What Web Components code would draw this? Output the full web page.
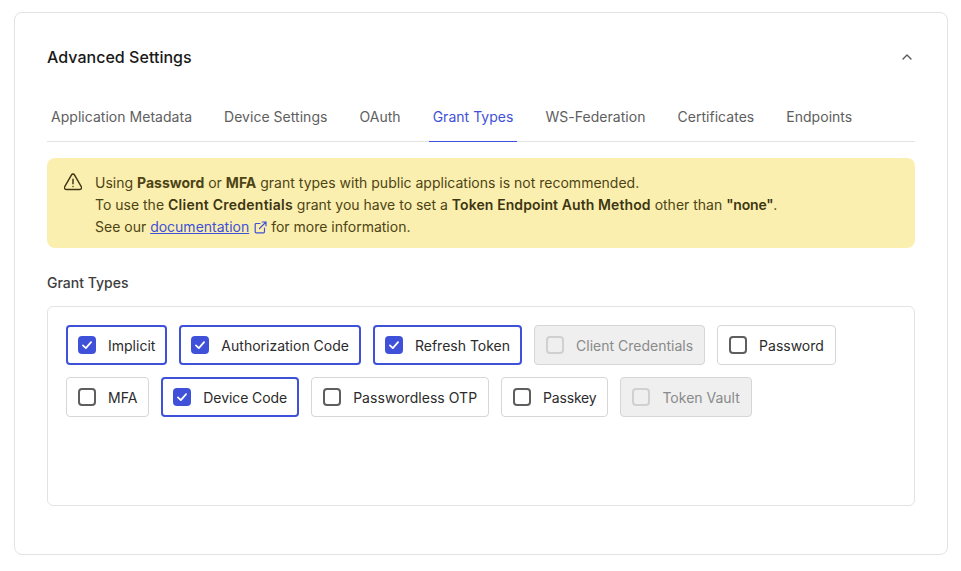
<!DOCTYPE html>
<html><head><meta charset="utf-8">
<style>
html,body{margin:0;padding:0;background:#fff}
body{font-family:Inter,"Liberation Sans",sans-serif;font-size:14px;color:#1e212a}
</style></head>
<body>
<template id="t-card"><style>
:host{display:block;box-sizing:border-box;margin:12px 13px 16px 14px;height:543px;border:1px solid #e3e3e3;border-radius:8px;padding:32px;background:#fff}
header{display:flex;justify-content:space-between;align-items:center;height:24px}
h2{margin:0;font-size:16px;line-height:24px;font-weight:500;color:#191919;letter-spacing:.03px}
svg{display:block;margin-right:1px}
</style>
<header><h2><slot name="title"></slot></h2>
<svg width="14" height="14" viewBox="0 0 14 14" fill="none" stroke="#5a5a5a" stroke-width="1.4" stroke-linecap="round" stroke-linejoin="round"><path d="M3 9l4-4 4 4"/></svg></header>
<slot></slot></template>

<template id="t-tabs"><style>
:host{display:flex;gap:24px;margin-top:32px;height:40px;border-bottom:1px solid #e3e3e3;box-sizing:content-box}
</style><slot></slot></template>

<template id="t-tab"><style>
:host{display:block;padding:0 4px 8px;height:40px;line-height:32px;font-size:14px;color:#5e5e5e;letter-spacing:.03px;white-space:nowrap;box-sizing:border-box}
:host([active]){color:#3f51d9;border-bottom:1px solid #3f51d9;height:41px}
</style><slot></slot></template>

<template id="t-banner"><style>
:host{display:flex;gap:13px;margin-top:16px;height:90px;box-sizing:border-box;padding:14px 17px;background:#fbefaf;border-radius:8px;color:#4d4415;font-size:14px;line-height:22px}
svg{flex:none;margin-top:1px}
::slotted(b){font-weight:600;color:#3d3612}
::slotted(.l1){letter-spacing:.006px}
</style>
<svg width="18" height="18" viewBox="1 1 16 16" fill="none" stroke="#3d3612" stroke-width="1.3" stroke-linecap="round" stroke-linejoin="round"><path d="M7.7 2.6 1.5 13.4A1.5 1.5 0 0 0 2.8 15.6h12.4a1.5 1.5 0 0 0 1.3-2.2L10.3 2.6a1.5 1.5 0 0 0-2.6 0z"/><path d="M9 6.6v4M9 13v.1"/></svg>
<div><slot></slot></div></template>

<template id="t-panel"><style>
:host{display:block}
.l{margin-top:24px;height:22px;line-height:22px;font-size:14px;font-weight:500;color:#3d3d3d}
.p{margin-top:12px;height:200px;box-sizing:border-box;border:1px solid #e3e3e3;border-radius:6px;padding:18px;display:flex;flex-wrap:wrap;align-content:flex-start;gap:12px}
</style><div class="l"><slot name="label"></slot></div><div class="p"><slot></slot></div></template>

<template id="t-opt"><style>
:host{display:flex;align-items:center;gap:12px;height:40px;box-sizing:border-box;padding:0 11px;border:1px solid #d6d6d6;border-radius:4px;background:#fff;color:#2b2b2b;font-size:14px;white-space:nowrap}
:host([checked]){border:2px solid #3f51d9;padding:0 10px}
:host([disabled]){background:#efefef;color:#8a8a8a}
:host([tight]){letter-spacing:-.08px}
:host([tighter]){letter-spacing:-.2px}
:host([loose]){letter-spacing:.04px}
i{display:block;width:18px;height:18px;box-sizing:border-box;border:2px solid #5e5e5e;border-radius:4px}
:host([disabled]) i{border-color:#d0d0d0}
:host([checked]) i{border:0;background:#3f51d9;display:flex;align-items:center;justify-content:center}
svg{display:none}
:host([checked]) svg{display:block}
</style><i><svg width="14" height="14" viewBox="0 0 12 12" fill="none" stroke="#fff" stroke-width="1.5" stroke-linecap="round" stroke-linejoin="round"><path d="M2.5 6.4 5 8.7 9.5 3.6"/></svg></i><slot></slot></template>

<x-card>
<span slot="title">Advanced Settings</span>
<x-tabs><x-tab>Application Metadata</x-tab><x-tab>Device Settings</x-tab><x-tab>OAuth</x-tab><x-tab active>Grant Types</x-tab><x-tab>WS-Federation</x-tab><x-tab>Certificates</x-tab><x-tab>Endpoints</x-tab></x-tabs>
<x-banner><span class="l1">Using <b>Password</b> or <b>MFA</b> grant types with public applications is not recommended.</span><br>To use the <b style="letter-spacing:.25px">Client Credentials</b> grant you have to set a <b style="letter-spacing:.1px">Token Endpoint Auth Method</b> other than <b style="letter-spacing:-.2px">"none"</b>.<br>See our <x-link>documentation</x-link> for more information.</x-banner>
<x-panel><span slot="label">Grant Types</span>
<x-opt checked>Implicit</x-opt><x-opt checked>Authorization Code</x-opt><x-opt checked>Refresh Token</x-opt><x-opt disabled>Client Credentials</x-opt><x-opt>Password</x-opt><x-opt>MFA</x-opt><x-opt checked tight>Device Code</x-opt><x-opt loose>Passwordless OTP</x-opt><x-opt tighter>Passkey</x-opt><x-opt disabled>Token Vault</x-opt>
</x-panel>
</x-card>
<template id="t-link"><style>
:host{display:inline;color:#3f51d9}
span{text-decoration:underline}
svg{vertical-align:-2px;margin-left:5px}
</style><span><slot></slot></span><svg width="13" height="13" viewBox="0 0 13 13" fill="none" stroke="#3f51d9" stroke-width="1.2" stroke-linecap="round" stroke-linejoin="round"><path d="M6 2.5H2.2a1 1 0 0 0-1 1v7.3a1 1 0 0 0 1 1h7.3a1 1 0 0 0 1-1V7"/><path d="M5.5 7.5 12 1M8.2 1H12v3.8"/></svg></template>
<script>
for(const [tag,id] of [['x-card','t-card'],['x-tabs','t-tabs'],['x-tab','t-tab'],['x-banner','t-banner'],['x-panel','t-panel'],['x-opt','t-opt'],['x-link','t-link']]){
 customElements.define(tag,class extends HTMLElement{constructor(){super();this.attachShadow({mode:'open'}).appendChild(document.getElementById(id).content.cloneNode(true));}});
}
</script>
</body></html>
